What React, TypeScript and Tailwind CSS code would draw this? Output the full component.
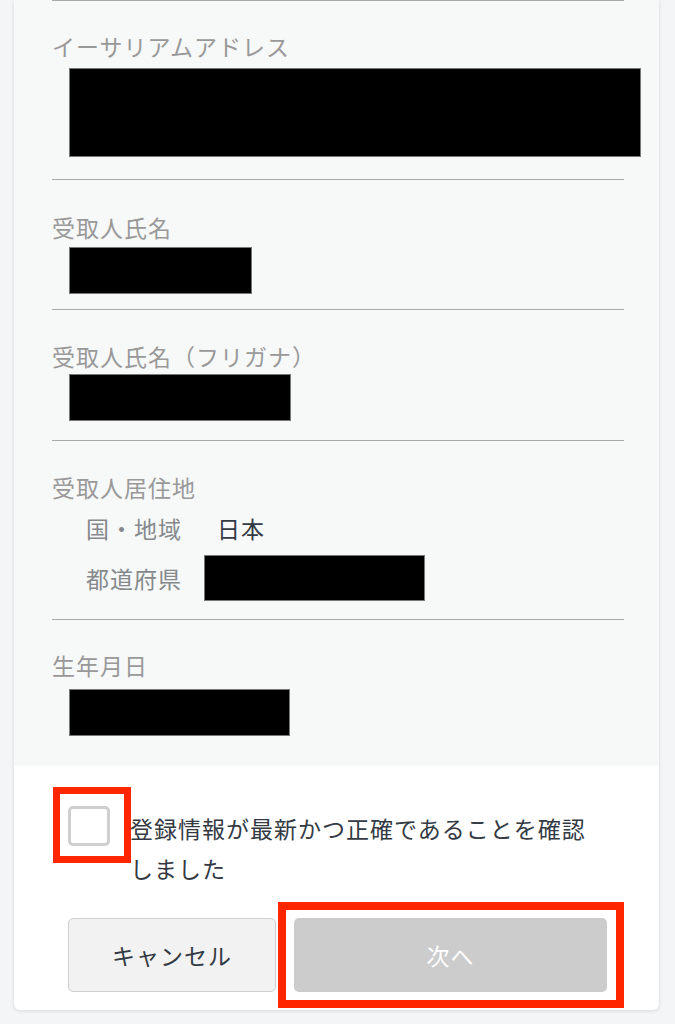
import React from "react";

const font = { fontFamily: '"Noto Sans CJK JP", "Noto Sans", sans-serif' };

function Divider() {
  return <div className="h-px bg-[#a9a9a9]" />;
}

function Redacted({ className }: { className: string }) {
  return <div className={`bg-black border border-[#777] ${className}`} />;
}

export default function App() {
  return (
    <div className="min-h-[1024px] bg-[#f4f5f7] overflow-hidden" style={font}>
      <div className="ml-[14px] mr-[16px] rounded-b-[6px] bg-white shadow-[0_1px_4px_rgba(0,0,0,0.12)]">
        {/* info section */}
        <div className="bg-[#f7f8f8] pl-[38px] pr-[35px] pb-[30px] text-[23px] tracking-[1px]">
          <Divider />
          <div className="pt-[29px] pb-[22px]">
            <div className="leading-[32px] text-[#999999]">イーサリアムアドレス</div>
            <Redacted className="mt-[6px] ml-[17px] w-[572px] h-[89px]" />
          </div>
          <Divider />
          <div className="pt-[31px] pb-[15px]">
            <div className="leading-[32px] text-[#999999]">受取人氏名</div>
            <Redacted className="mt-[4px] ml-[17px] w-[183px] h-[47px]" />
          </div>
          <Divider />
          <div className="pt-[30px] pb-[19px]">
            <div className="leading-[32px] text-[#999999]">受取人氏名（フリガナ）</div>
            <Redacted className="mt-[2px] ml-[17px] w-[222px] h-[47px]" />
          </div>
          <Divider />
          <div className="pt-[30px] pb-[18px]">
            <div className="leading-[32px] text-[#999999]">受取人居住地</div>
            <div className="mt-[9px] ml-[34px] flex items-center leading-[32px]">
              <span className="w-[131px] text-[#85898c]">国・地域</span>
              <span className="text-[#333a44]">日本</span>
            </div>
            <div className="mt-[11px] ml-[34px] flex items-center">
              <span className="w-[118px] leading-[32px] text-[#85898c]">都道府県</span>
              <Redacted className="w-[221px] h-[46px]" />
            </div>
          </div>
          <Divider />
          <div className="pt-[29px]">
            <div className="leading-[32px] text-[#999999]">生年月日</div>
            <Redacted className="mt-[8px] ml-[17px] w-[221px] h-[47px]" />
          </div>
        </div>

        {/* confirmation section */}
        <div className="pt-[40px] pb-[18px] pl-[54px] pr-[52px] text-[23px] tracking-[1px]">
          <div className="flex items-start">
            <div className="relative shrink-0">
              <div className="w-[42px] h-[40px] rounded-[5px] border-[3px] border-[#cfcfcf] bg-white" />
              <div className="absolute left-[-15px] top-[-19px] w-[78px] h-[76px] border-[7px] border-[#ff2600]" />
            </div>
            <div className="ml-[20px] mt-[2px] leading-[40px] text-[#333a44]">
              登録情報が最新かつ正確であることを確認
              <br />
              しました
            </div>
          </div>
          <div className="mt-[30px] flex gap-[18px]">
            <button className="w-[208px] h-[74px] rounded-[5px] border border-[#cfcfcf] bg-[#f2f2f2] text-[#333a44] text-[23px] tracking-[1px]">
              キャンセル
            </button>
            <div className="relative flex-1">
              <button className="w-full h-[74px] rounded-[5px] bg-[#cccccc] text-white text-[23px] tracking-[1px]">
                次へ
              </button>
              <div className="absolute left-[-16px] right-[-17px] top-[-16px] bottom-[-16px] border-[8px] border-[#ff2600]" />
            </div>
          </div>
        </div>
      </div>
    </div>
  );
}
